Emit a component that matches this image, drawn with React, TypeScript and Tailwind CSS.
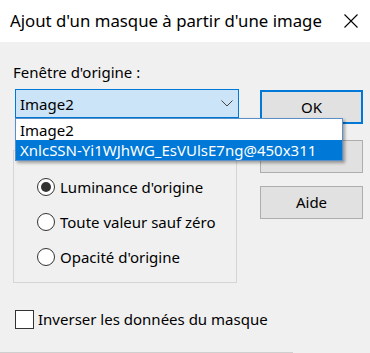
import React from "react";

const font = { fontFamily: '"Noto Sans", "Open Sans", sans-serif' };

function Radio({ checked, label }: { checked?: boolean; label: string }) {
  return (
    <div className="flex h-[35px] items-center">
      <div className="ml-[23px] flex h-[18px] w-[18px] items-center justify-center rounded-full border border-[#333333] bg-white">
        {checked && <div className="h-[10px] w-[10px] rounded-full bg-[#333333]" />}
      </div>
      <span className="ml-[5px] whitespace-nowrap text-[15px] leading-[20px] text-black">{label}</span>
    </div>
  );
}

export default function App() {
  return (
    <div
      className="relative h-[353px] w-[370px] overflow-hidden bg-[#f0f0f0]"
      style={font}
    >
      {/* title bar */}
      <div className="flex h-[42px] items-center justify-between bg-white pl-[10px] pr-[12px]">
        <span className="whitespace-nowrap text-[16.8px] leading-[24px] text-black">
          Ajout d'un masque à partir d'une image
        </span>
        <svg width="14" height="14" viewBox="0 0 14 14">
          <path d="M0.5 0.5 L13.5 13.5 M13.5 0.5 L0.5 13.5" stroke="#000" strokeWidth="1.1" fill="none" />
        </svg>
      </div>

      {/* body */}
      <div className="flex">
        <div className="ml-[13px] w-[226px]">
          <div className="whitespace-nowrap pt-[20px] text-[15px] leading-[20px] text-black">Fenêtre d'origine :</div>
          <div className="ml-[2px] mt-[7px] flex h-[29px] w-[224px] items-center justify-between border border-[#0078d7] bg-[#cce4f7] pl-[4px] pr-[5px]">
            <span className="text-[15px] leading-[20px] text-black">Image2</span>
            <svg width="12" height="7" viewBox="0 0 12 7">
              <path d="M0.5 0.5 L6 6 L11.5 0.5" stroke="#444" strokeWidth="1" fill="none" />
            </svg>
          </div>
          <div className="mt-[32px] h-[133px] w-[224px] border border-[#d5d5d5] pt-[18px]">
            <Radio checked label="Luminance d'origine" />
            <Radio label="Toute valeur sauf zéro" />
            <Radio label="Opacité d'origine" />
          </div>
          <div className="ml-[2px] mt-[26px] flex items-center">
            <div className="h-[19px] w-[19px] shrink-0 border border-[#333333] bg-white" />
            <span className="ml-[4px] whitespace-nowrap text-[15px] leading-[20px] text-black">
              Inverser les données du masque
            </span>
          </div>
        </div>
        <div className="ml-[21px] w-[103px] pt-[48px]">
          <div className="flex h-[34px] items-center justify-center border-2 border-[#0078d7] bg-[#e1e1e1] text-[15px] text-black">
            OK
          </div>
          <div className="mt-[16px] h-[33px] border border-[#adadad] bg-[#e1e1e1]" />
          <div className="mt-[13px] flex h-[33px] items-center justify-center border border-[#adadad] bg-[#e1e1e1] text-[15px] text-black">
            Aide
          </div>
        </div>
      </div>

      {/* bottom edge */}
      <div className="absolute bottom-0 left-0 h-px w-[293px] bg-[#cfcfcf]" />

      {/* dropdown list */}
      <div className="absolute left-[15px] top-[118px] w-[328px] border border-[#5a8fc8] bg-white shadow-[2px_2px_3px_rgba(0,0,0,0.35)]">
        <div className="flex h-[21px] items-center pl-[4px] text-[15px] leading-[20px] text-black">Image2</div>
        <div className="flex h-[20px] items-center whitespace-nowrap bg-[#0078d7] pl-[4px] text-[15px] leading-[20px] text-white">
          XnlcSSN-Yi1WJhWG_EsVUlsE7ng@450x311
        </div>
      </div>
    </div>
  );
}
